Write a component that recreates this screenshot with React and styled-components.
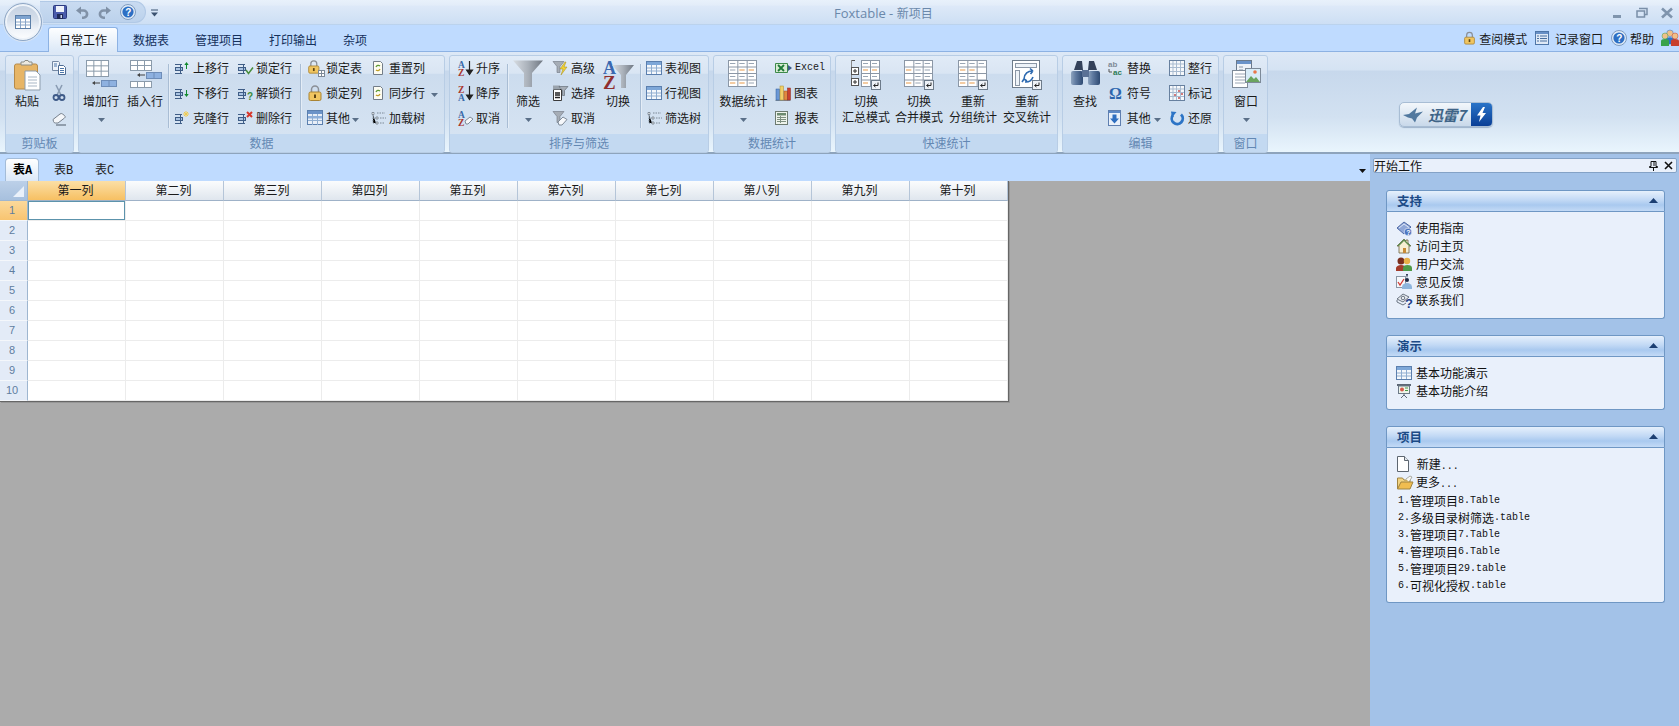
import React from 'react';
import styled, { createGlobalStyle } from 'styled-components';

const Global = createGlobalStyle`
  html, body { margin: 0; padding: 0; height: 100%; overflow: hidden; }
  body { font-family: "Noto Sans CJK SC", "Liberation Sans", sans-serif; font-size: 12px; color: #1a1a1a; }
  #root { height: 100%; }
`;

const Page = styled.div`display:flex;flex-direction:column;height:726px;width:1679px;overflow:hidden;position:relative;`;
const TitleBar = styled.div`height:25px;flex:none;display:flex;align-items:center;background:linear-gradient(#e8f1fb 0,#e3edf9 20%,#dde9f8 25%,#cddff4 96%,#a9c6e6 100%);`;
const Qat = styled.div`margin-left:40px;width:106px;height:22px;margin-top:-1px;display:flex;align-items:center;padding-left:13px;gap:9px;box-sizing:border-box;background:linear-gradient(#c9dbf1,#bcd2ec);border:1px solid #b1c9e6;border-left:none;border-radius:0 12px 12px 0;`;
const QatCaret = styled.div`margin-left:5px;width:9px;display:flex;`;
const TitleText = styled.div`margin-left:674px;width:100px;white-space:nowrap;color:#6b88aa;font-size:12px;line-height:25px;`;
const TitleLatin = styled.span`font-family:"Open Sans",sans-serif;font-size:13px;`;
const WinControls = styled.div`margin-left:auto;display:flex;align-items:center;gap:12px;padding-right:5px;`;
const Orb = styled.div`position:absolute;left:4px;top:3px;width:38px;height:38px;border-radius:50%;box-sizing:border-box;border:1px solid #8ea6c4;background:linear-gradient(#c3d0e1 0,#d6dfeb 45%,#eef2f8 70%,#fdfeff 100%);display:flex;align-items:center;justify-content:center;box-shadow:0 0 0 1px #d7e4f4,inset 0 0 0 2px #eef3f9;z-index:5;`;

const TabRow = styled.div`height:26px;flex:none;display:flex;align-items:flex-end;gap:4px;padding-left:48px;background:#bfdbff;`;
const Tab = styled.div`height:24px;box-sizing:border-box;padding:0 10px;line-height:23px;color:#15315c;white-space:nowrap;position:relative;border:1px solid transparent;border-bottom:none;
  ${p => p.$active && `color:#111;margin-bottom:-1px;height:25px;background:linear-gradient(#fdfeff,#dbe8f7);border-color:#8db2e3;border-radius:3px 3px 0 0;z-index:2;`}`;
const TopActions = styled.div`margin-left:auto;display:flex;align-items:center;height:26px;color:#1a1a1a;`;
const TopAction = styled.div`display:flex;align-items:center;gap:3px;margin-left:${p => p.$ml}px;white-space:nowrap;`;

const Ribbon = styled.div`height:103px;flex:none;box-sizing:border-box;display:flex;align-items:flex-start;gap:4px;padding:3px 0 0 5px;border-top:1px solid #8db2e3;border-bottom:2px solid #8ea4bc;background:linear-gradient(#dde8f6 0,#d5e3f3 18%,#c7d8ec 19%,#d2e1f1 65%,#e9f5fd 100%);`;
const Group = styled.div`width:${p => p.$w}px;height:98px;flex:none;box-sizing:border-box;display:flex;flex-direction:column;border:1px solid #b8cde5;border-radius:3px;overflow:hidden;background:linear-gradient(#e1ebf7 0,#d9e5f3 18%,#ccdcee 19%,#d8e5f3 100%);`;
const GroupBody = styled.div`height:78px;flex:none;display:flex;align-items:flex-start;margin-left:-1px;`;
const Caption = styled.div`height:18px;line-height:17px;flex:none;text-align:center;color:#6388b3;background:#c3d9f1;`;
const Large = styled.div`width:${p => p.$w}px;flex:none;display:flex;flex-direction:column;align-items:center;padding-top:3px;`;
const LargeIcon = styled.div`height:34px;display:flex;align-items:flex-start;justify-content:center;padding-top:1px;box-sizing:border-box;`;
const LargeLabel = styled.div`line-height:16px;text-align:center;white-space:nowrap;`;
const Drop = styled.div`height:14px;margin-top:4px;display:flex;align-items:center;`;
const Sep = styled.div`width:1px;height:64px;margin:8px 0 0 ${p => p.$ml}px;flex:none;background:#a9bdd4;box-shadow:1px 0 0 #e4edf7;`;
const SmallCol = styled.div`width:${p => p.$w}px;box-sizing:border-box;padding:0 0 0 ${p => p.$pl}px;margin-top:-1px;flex:none;display:flex;flex-direction:column;`;
const Small = styled.div`height:25px;display:flex;align-items:center;gap:3px;white-space:nowrap;`;
const InlineCaret = styled.span`margin-left:${p => p.$ml}px;display:inline-flex;vertical-align:middle;`;
const Lat = styled.span`font-family:"Liberation Mono",monospace;font-size:10px;${p => p.$bold && 'font-weight:700;'}`;
const SheetLat = styled.span`font-family:"Liberation Mono",monospace;font-size:12px;letter-spacing:-1.2px;${p => p.$bold && 'font-weight:700;'}`;

const Logo = styled.div`margin:47px 0 0 127px;width:94px;height:25px;flex:none;display:flex;box-sizing:border-box;border:1px solid #a8bdd4;border-radius:5px;overflow:hidden;background:linear-gradient(#f3f7fb,#c9d9ea);box-shadow:0 1px 1px #9db2ca;`;
const LogoMain = styled.div`flex:1;display:flex;align-items:center;gap:4px;padding-left:3px;color:#3f6487;font-style:italic;font-weight:700;font-size:15px;letter-spacing:-.5px;`;
const LogoBolt = styled.div`width:21px;display:flex;align-items:center;justify-content:center;background:linear-gradient(#2a74c8,#0a3f96);`;

const Main = styled.div`flex:1;display:flex;min-height:0;`;
const Left = styled.div`width:1370px;flex:none;display:flex;flex-direction:column;background:#ababab;`;
const SheetBar = styled.div`height:27px;flex:none;display:flex;align-items:flex-end;gap:7px;padding:0 4px 0 5px;background:#bfdbff;`;
const SheetTab = styled.div`height:${p => p.$active ? 23 : 22}px;box-sizing:border-box;padding:0 7px;line-height:${p => p.$active ? 19 : 17}px;color:#222;border:1px solid transparent;border-bottom:none;
  ${p => p.$active && `font-weight:700;color:#000;background:linear-gradient(#fff,#dbe8f8);border-color:#a4bcd8;border-radius:4px 4px 0 0;`}`;
const SheetCaret = styled.div`margin:auto 0 8px auto;display:flex;`;

const GridWrap = styled.div`flex:1;`;
const Grid = styled.div`display:grid;grid-template-columns:28px repeat(10,98px);grid-auto-rows:20px;width:1008px;box-sizing:content-box;background:#fff;border-right:1px solid #666;border-bottom:1px solid #666;box-shadow:1px 1px 0 #969696;`;
const Corner = styled.div`background:linear-gradient(#bcd0e8,#a7c0de);border-right:1px solid #9eb6d0;border-bottom:1px solid #9eb6d0;box-sizing:border-box;display:flex;align-items:flex-end;justify-content:flex-end;padding:0 3px 3px 0;`;
const ColHead = styled.div`box-sizing:border-box;text-align:center;padding-right:2px;line-height:18px;color:#1a1a1a;border-right:1px solid #b5c5d8;border-bottom:1px solid #9fb2c8;background:${p => p.$active ? 'linear-gradient(#fbdfa6,#f7c062)' : 'linear-gradient(#fbfcfd,#dfe6ee)'};`;
const RowHead = styled.div`box-sizing:border-box;text-align:center;padding-right:3px;font-family:"Liberation Sans",sans-serif;font-size:11px;line-height:19px;color:#5f7d9f;border-right:1px solid #9eb6d0;border-bottom:1px solid #f4f7fb;background:${p => p.$active ? 'linear-gradient(#fbd99b,#f8c470)' : '#e3ebf7'};`;
const Cell = styled.div`box-sizing:border-box;border-right:1px solid #ececec;border-bottom:1px solid #ececec;${p => p.$selected && 'box-shadow:inset 0 0 0 1px #5c93ac;'}`;

const Pane = styled.div`flex:1;background:#a3c2e8;display:flex;flex-direction:column;`;
const PaneHead = styled.div`height:15px;margin:4px 2px 0 3px;flex:none;box-sizing:border-box;display:flex;align-items:center;padding:0 3px 0 0;line-height:13px;background:#e9f0fb;border:1px solid #84a2c6;border-radius:2px;color:#111;`;
const PaneHeadBtns = styled.div`margin-left:auto;display:flex;gap:6px;align-items:center;`;
const Panels = styled.div`display:flex;flex-direction:column;gap:16px;padding:17px 14px 0 16px;`;
const Panel = styled.div`display:flex;flex-direction:column;`;
const PanelHead = styled.div`height:22px;box-sizing:border-box;display:flex;align-items:center;justify-content:space-between;padding:0 6px 2px 10px;color:#1c4a86;font-weight:700;font-size:12.5px;background:linear-gradient(#e6f0fc 0,#c2d9f5 45%,#a9c9ef 70%,#c3daf6 100%);border:1px solid #6f97c4;border-radius:3px 3px 0 0;`;
const PanelBody = styled.div`box-sizing:border-box;padding:7px 0 9px 9px;background:#e9f0fb;border:1px solid #6f97c4;border-top:none;border-radius:0 0 3px 3px;`;
const PanelItem = styled.div`height:18px;display:flex;align-items:center;gap:4px;white-space:nowrap;color:#111;`;
const PanelItemText = styled.span`position:relative;top:-1px;`;
const Recent = styled.div`height:17px;box-sizing:border-box;padding:2px 0 0 2px;display:flex;align-items:center;white-space:nowrap;color:#111;`;

/* ---------- icons ---------- */
const SvgBox = styled.svg`display:block;flex:none;overflow:visible;`;
const S = ({ w = 16, h = 16, vb, children }) => <SvgBox width={w} height={h} viewBox={vb || `0 0 ${w} ${h}`}>{children}</SvgBox>;
const Tx = ({ x, y, s = 7, c = '#000', f = 'Liberation Sans', b = 700, children }) => <text x={x} y={y} fontSize={s} fill={c} fontFamily={f} fontWeight={b}>{children}</text>;

const Caret = ({ c = '#5a6f88' }) => <S w={7} h={4}><path d="M0 0h7L3.5 4z" fill={c} /></S>;
const QatDrop = () => <S w={7} h={8}><path d="M0 1h7" stroke="#3b5270" /><path d="M0 3.5h7L3.5 7.5z" fill="#3b5270" /></S>;
const Save = () => <S w={14} h={14}><rect x=".5" y=".5" width="13" height="13" rx="1" fill="#4a5cac" stroke="#2b3a80" /><rect x="3" y="1" width="8" height="6" fill="#eef2fb" /><rect x="4" y="9" width="6" height="5" fill="#1f2a58" /><rect x="7.5" y="10" width="1.5" height="3" fill="#cdd6ee" /></S>;
const Undo = ({ flip }) => <S w={13} h={13}><g transform={flip ? 'translate(13 0) scale(-1 1)' : undefined}><path d="M4 4.5h3.5a3.6 3.6 0 0 1 0 7.2H6" fill="none" stroke="#8192a8" strokeWidth="2.6" /><path d="M5 .5v8L0 4.5z" fill="#7f90a6" /></g></S>;
const Help = () => <S w={16} h={16}><circle cx="8" cy="8" r="7.5" fill="#dfeaf6" stroke="#7f9cc0" /><circle cx="8" cy="8" r="5.6" fill="#2d6fc4" /><Tx x="5.2" y="11.7" s={10} c="#fff">?</Tx></S>;
const OrbGrid = () => <S w={16} h={14}><rect x=".5" y=".5" width="15" height="13" fill="#fff" stroke="#5c7fa8" /><rect x="1" y="1" width="14" height="3" fill="#7ea3cf" /><path d="M1 7h14M1 10h14M5.5 4v9M10.5 4v9" stroke="#88a5c8" /></S>;
const Clipboard = () => <S w={27} h={31}><rect x=".5" y="4" width="23" height="25" rx="2" fill="#e7b566" stroke="#b68a4a" /><path d="M7 5V2h3l1-1.5h3L15 2h3v3z" fill="#ece9e0" stroke="#8c8c84" /><path d="M11 11h11l4 4v15H11z" fill="#fff" stroke="#8d9dad" /><path d="M14 17h9M14 20h9M14 23h9M14 26h9" stroke="#a9b7c6" /></S>;
const Copy = () => <S><path d="M1.5 1.5h6l1 1v8h-7z" fill="#eef3fa" stroke="#7589a4" /><path d="M7.5 5.5h5l2 2v7h-7z" fill="#fff" stroke="#4e6c94" /><path d="M9 8.500h4M9 10.500h4M9 12.500h4M3 4h3M3 6h3" stroke="#4d77aa" /></S>;
const Cut = () => <S><path d="M5 0l5 10M11 0L6 10" stroke="#8b9db4" strokeWidth="1.6" /><circle cx="5" cy="12.500" r="2.500" fill="none" stroke="#3e5a88" strokeWidth="1.8" /><circle cx="11" cy="12.500" r="2.500" fill="none" stroke="#3e5a88" strokeWidth="1.8" /></S>;
const Eraser = () => <S><path d="M2 9.500l7-5.500a2 2 0 0 1 2.500 0l2 1.500a1.500 1.500 0 0 1 0 2.500L7 13H4.500a2 2 0 0 1-2-1.500z" fill="#f4f6f9" stroke="#76808c" /><path d="M5 15h10" stroke="#4f5a68" /></S>;
const GridLines = ({ x, y, w, h, cols, rows, c = '#8b9bab', fill = '#fff' }) => {
  const cw = w / cols, ch = h / rows; let d = '';
  for (let i = 1; i < cols; i++) d += `M${x + i * cw} ${y}v${h}`;
  for (let i = 1; i < rows; i++) d += `M${x} ${y + i * ch}h${w}`;
  return <g><rect x={x + .5} y={y + .5} width={w} height={h} fill={fill} stroke={c} /><path d={d} transform="translate(.5 .5)" stroke={c} fill="none" /></g>;
};
const BlueBoxes = ({ x, y }) => <g><rect x={x + .5} y={y + .5} width="15" height="6" fill="#8eb1e0" stroke="#6e8db8" /><path d={`M${x + 8} ${y}v7`} stroke="#6e8db8" /></g>;
const LeftArrow = ({ x, y }) => <path d={`M${x} ${y}l3-2v1.500h5v1h-5v1.500z`} fill="#444" />;
const AddRow = () => <S w={31} h={28}><GridLines x={0} y={0} w={22} h={16} cols={3} rows={3} /><LeftArrow x={6} y={23} /><BlueBoxes x={15} y={20} /></S>;
const InsertRow = () => <S w={31} h={28}><GridLines x={0} y={0} w={21} h={10} cols={3} rows={2} /><LeftArrow x={7} y={15} /><BlueBoxes x={16} y={12} /><GridLines x={0} y={21} w={21} h={6} cols={3} rows={1} /></S>;
const RowGlyph = () => <g><path d="M1 4.500h7M1 13.500h7" stroke="#3f5d86" /><rect x="1.500" y="7.500" width="7" height="3" fill="#a9c3e2" stroke="#3f5d86" /><path d="M6.500 4v10" stroke="#3f5d86" /></g>;
const RowUp = () => <S><RowGlyph /><path d="M12.500 2l2.200 3H13v4h-1V5h-1.700z" fill="#118a2e" /></S>;
const RowDown = () => <S><RowGlyph /><path d="M12.500 12l2.200-3H13V5h-1v4h-1.700z" fill="#118a2e" /></S>;
const RowClone = () => <S><RowGlyph /><path d="M12 1v6M9 4h6M10 2l4 4M14 2l-4 4" stroke="#f0cb4e" /></S>;
const RowLock = () => <S><RowGlyph /><path d="M9 10l2.500 3.500L16 7.500" fill="none" stroke="#4a8e3e" strokeWidth="1.500" /></S>;
const RowQ = () => <S><RowGlyph /><Tx x={10} y={15} s={10} c="#3a8a3a">?</Tx></S>;
const RowDel = () => <S><RowGlyph /><path d="M10 2l5 5M15 2l-5 5" stroke="#d7352a" strokeWidth="2" /></S>;
const LockShape = () => <g><path d="M4.500 7V4.500a3.500 3.500 0 0 1 7 0V7" fill="none" stroke="#8a8f96" strokeWidth="1.500" /><rect x="2" y="7" width="12" height="8.500" rx="1.500" fill="#f0c560" stroke="#a98435" /><rect x="7" y="9.500" width="2" height="3.500" fill="#5b4314" /></g>;
const Lock = () => <S><LockShape /></S>;
const TopLock = () => <S w={13} h={14} vb="0 0 16 16"><LockShape /></S>;
const LockTable = () => <S><g transform="scale(.85)"><LockShape /></g><GridLines x={11} y={10} w={6} h={6} cols={2} rows={2} c="#7d8a98" /></S>;
const TableBlue = () => <S w={16} h={14}><rect x=".5" y=".5" width="15" height="13" fill="#f5f8fc" stroke="#5b7fae" /><rect x="1" y="1" width="14" height="3" fill="#7ea7d8" /><path d="M1 7h14M1 10h14M5.500 4v9M10.500 4v9" stroke="#8fadd0" /></S>;
const TableHeavy = () => <S w={16} h={15}><rect x=".5" y=".5" width="15" height="14" fill="#e8eef7" stroke="#5b7fae" /><rect x="1" y="1" width="14" height="3" fill="#6c93c8" /><rect x="1" y="6" width="14" height="2.500" fill="#8eb0dc" /><path d="M1 10.500h14M5.500 4v11M10.500 4v11" stroke="#8fadd0" /></S>;
const DocSync = () => <S><path d="M3.500 1.500h7l2 2v11h-9z" fill="#fdfcf2" stroke="#737d88" /><path d="M6 7a2.500 2.500 0 0 1 4-1" fill="none" stroke="#5f9a33" strokeWidth="1.300" /><path d="M10 9a2.500 2.500 0 0 1-4 1" fill="none" stroke="#c09f28" strokeWidth="1.300" /></S>;
const Tree = () => <S><path d="M2 2.500h2v2H2zM6 7h2v2H6zM6 12h2v2H6z" fill="#fff" stroke="#6f7b88" strokeWidth=".8" /><path d="M3 5v8h3M3 8h3M7 3h8M10 8h6M10 13h5" stroke="#7b8896" strokeDasharray="1.500 1" /></S>;
const AZ = ({ top, bot, tc, bc }) => <g><Tx x={1} y={7.500} s={9.500} f="Liberation Serif" c={tc}>{top}</Tx><Tx x={1} y={15.500} s={9.500} f="Liberation Serif" c={bc}>{bot}</Tx></g>;
const DownArrow = () => <path d="M12.500 1v12M9.500 10l3 4.500 3-4.500z" stroke="#222" strokeWidth="1.200" fill="#222" />;
const SortAsc = () => <S><AZ top="A" bot="Z" tc="#3a6aa8" bc="#a9362e" /><DownArrow /></S>;
const SortDesc = () => <S><AZ top="Z" bot="A" tc="#a9362e" bc="#3a6aa8" /><DownArrow /></S>;
const MiniEraser = () => <path d="M8 11l5-4 3 2-5 5H9z" fill="#f6f8fb" stroke="#7f8b99" />;
const SortClear = () => <S><AZ top="A" bot="Z" tc="#3a6aa8" bc="#a9362e" /><MiniEraser /></S>;
const FunnelDefs = ({ id }) => <linearGradient id={id} x1="0" x2="1" y1="0" y2="0"><stop offset="0" stopColor="#d8dde3" /><stop offset=".5" stopColor="#aab1ba" /><stop offset="1" stopColor="#6f7782" /></linearGradient>;
const FunnelLarge = () => <S w={30} h={27}><defs><FunnelDefs id="fgA" /></defs><path d="M0 .5h30L19 13v14h-8V13z" fill="url(#fgA)" /></S>;
const FunnelSmall = () => <path d="M1 1.500h11L8 6.500v6H5v-6z" fill="#a6adb6" stroke="#6e7681" strokeWidth=".6" />;
const FunnelBolt = () => <S><FunnelSmall /><path d="M13 2l-5 7h3l-2 6 6-8h-3l2-5z" fill="#efd035" stroke="#a58d1a" strokeWidth=".5" /></S>;
const FunnelSelect = () => <S><path d="M1.500 4.500h8v11h-8z" fill="#fff" stroke="#3a3a3a" /><path d="M3 8h5M3 10h5M3 12.500h5" stroke="#222" strokeWidth="1.300" /><path d="M1 .5h7v4H1z" fill="#9aa3ad" /><path d="M7 1.500h9l-3.500 4v5h-2v-5z" fill="#a6adb6" stroke="#59616c" strokeWidth=".6" /></S>;
const FunnelClear = () => <S><FunnelSmall /><path d="M6 12l5-5 4 2.500-5 5.500H7z" fill="#f6f8fb" stroke="#7f8b99" /></S>;
const AZFunnel = () => <S w={30} h={30}><defs><FunnelDefs id="fgB" /></defs><Tx x={0} y={14} s={18} f="Liberation Serif" c="#3a68b0">A</Tx><Tx x={0} y={29} s={19} f="Liberation Serif" c="#8f2f2f">Z</Tx><path d="M9 5h22L23 15v13h-5V15z" fill="url(#fgB)" /></S>;
const Stat = ({ cells, badge, cols = 3, w = 28, h = 26, plus }) => {
  const x0 = plus ? 10 : 0; const cw = (w - x0) / cols;
  return <S w={31} h={31}>
    <GridLines x={x0} y={0} w={w - x0} h={h} cols={cols} rows={4} c="#8b97a6" />
    {cells.map(([c, r, col], i) => <path key={i} d={`M${x0 + c * cw + 2} ${r * (h / 4) + 3.500}h${cw - 4}`} stroke={col === 'o' ? '#e89a48' : '#9aa6b4'} strokeWidth="1.200" />)}
    {plus && <g><path d="M0 .5h4" stroke="#555" fill="none" /><path d="M.5 0v22" stroke="#888" /><rect x=".5" y="7.500" width="7" height="7" fill="#fff" stroke="#555" /><path d="M2 11h4M4 9v4" stroke="#333" /><rect x=".5" y="18.500" width="7" height="7" fill="#fff" stroke="#555" /><path d="M2 22h4M4 20v4" stroke="#333" /></g>}
    {badge && <g><rect x="20.500" y="20.500" width="9" height="9" fill="#eef2f7" stroke="#6d7b8a" /><path d="M27 22.500v3h-4M24.500 24l-2 1.500 2 1.500" fill="none" stroke="#222" /></g>}
  </S>;
};
const g = (c, r) => [c, r, 'g'], o = (c, r) => [c, r, 'o'];
const StatMain = () => <Stat cells={[g(0,0),g(1,0),g(2,0),g(0,1),o(1,1),o(2,1),g(0,2),g(1,2),g(2,2),o(0,3),o(1,3),g(2,3)]} />;
const StatA = () => <Stat plus badge cols={2} cells={[g(0,0),g(1,0),o(0,1),o(1,1),g(0,2),g(1,2),o(0,3)]} />;
const StatB = () => <Stat badge cells={[g(1,0),g(2,0),o(0,1),g(1,1),g(2,1),g(1,2),g(2,2),o(0,3),g(1,3)]} />;
const StatC = () => <Stat badge cells={[g(0,0),g(1,0),g(2,0),o(0,1),o(1,1),g(0,2),g(1,2),o(0,3),o(1,3)]} />;
const CrossIcon = () => <S w={31} h={31}><rect x=".5" y=".5" width="27" height="27" fill="#fff" stroke="#6d7b8a" /><rect x="3.500" y="3.500" width="21" height="4" fill="#eef3f8" stroke="#8b97a6" /><rect x="3.500" y="10.500" width="4" height="15" fill="#eef3f8" stroke="#8b97a6" /><path d="M12 19a8 8 0 0 1 9-8M21 11l-3-2.500M21 11l-2.500 3M12 19l3 2M12 19l-2 3M13 22a8 8 0 0 0 8-5" stroke="#2e6ab0" strokeWidth="1.600" fill="none" /><rect x="20.500" y="20.500" width="9" height="9" fill="#eef2f7" stroke="#6d7b8a" /><path d="M27 22.500v3h-4M24.500 24l-2 1.500 2 1.500" fill="none" stroke="#222" /></S>;
const Excel = () => <S w={17} h={14}><path d="M.5 2.500h12v9H.5z" fill="#d8ecd4" stroke="#3e8a4a" /><path d="M3 4l6 6M9 4l-6 6" stroke="#1e7a37" strokeWidth="1.800" /><path d="M13 4l4 3-4 3z" fill="#3a5a88" /></S>;
const Chart = () => <S w={16} h={16}><path d="M.5 15.500h15" stroke="#7d8a98" /><rect x="1" y="4" width="3.500" height="11" fill="#6a97d6" stroke="#2e5c9d" strokeWidth=".5" /><rect x="5" y="1" width="3.500" height="14" fill="#f1d06a" stroke="#a68a2a" strokeWidth=".5" /><rect x="9" y="6" width="3.500" height="9" fill="#e08a40" stroke="#a9521e" strokeWidth=".5" /><rect x="12.500" y="3" width="3" height="12" fill="#c9412f" stroke="#8a2a1e" strokeWidth=".5" /></S>;
const Report = () => <S w={14} h={14}><rect x=".5" y=".5" width="12" height="13" fill="#eef3ec" stroke="#6c7a70" /><rect x="2" y="2" width="9" height="2.500" fill="#6c8a70" /><path d="M2 6.500h9M2 8.500h9M2 10.500h9M5.500 5v7" stroke="#7d8f80" /></S>;
const Binoculars = () => <S w={29} h={27}><defs><linearGradient id="bin" x1="0" x2="1" y1="0" y2="0"><stop offset="0" stopColor="#8ea4bf" /><stop offset=".4" stopColor="#5f7aa0" /><stop offset="1" stopColor="#2e4a72" /></linearGradient></defs><path d="M3 10l3-9h5l1 9v5h5v-5l1-9h5l3 9z" fill="#33415a" /><rect x="0" y="11" width="12" height="14" rx="2" fill="url(#bin)" /><rect x="17" y="11" width="12" height="14" rx="2" fill="url(#bin)" /><rect x="11" y="10" width="7" height="7" fill="#5a7195" /></S>;
const Replace = () => <S><Tx x={0} y={6.500} s={8} c="#808b98">ab</Tx><Tx x={5} y={14.500} s={8} c="#2a7a55">ac</Tx><path d="M1 9v3h3" stroke="#555" fill="none" /></S>;
const Omega = () => <S><Tx x={1} y={14} s={16} f="Liberation Serif" c="#2c65ad">Ω</Tx></S>;
const BlueDown = () => <S w={13} h={16}><rect x=".5" y=".5" width="12" height="15" fill="#e9f0fa" stroke="#5f7fb0" /><rect x="1" y="1" width="11" height="2" fill="#5d89c6" /><path d="M4.500 4.500h4v4h2.500l-4.500 5-4.500-5h2.500z" fill="#2f6fc0" /></S>;
const FineGrid = ({ dots }) => <S w={16} h={16}><rect x=".5" y=".5" width="15" height="15" fill="#f6f8fb" stroke="#67809f" /><path d="M4 1v14M7.500 1v14M11.500 1v14M1 4h14M1 7.500h14M1 11.500h14" stroke="#a9bbd0" />{dots && <path d="M5 9h2v2H5zM9 5h2v2H9zM9 12h2v2H9zM12 8h2v2h-2z" fill="#d27a7a" />}</S>;
const RestoreI = () => <S><path d="M12 4.500A5.500 5.500 0 1 1 4 5" fill="none" stroke="#2c74c6" strokeWidth="2.800" /><path d="M2 1.500l5.500.5L3 7.500z" fill="#2c74c6" /></S>;
const WindowI = () => <S w={29} h={28}><rect x="4.500" y=".5" width="15" height="20" fill="#eef2f8" stroke="#6b7a8c" /><rect x="5" y="1" width="14" height="3" fill="#6b93c9" /><path d="M7 7h4M7 10h4M7 13h4" stroke="#8a97a6" /><rect x=".5" y="10.500" width="15" height="17" fill="#fff" stroke="#7d8a98" /><path d="M3 14h10M3 17h10M3 20h10M3 23h10" stroke="#9aa6b4" /><rect x="13.500" y="8.500" width="15" height="14" fill="#d8ecf8" stroke="#7d8a98" /><path d="M14 22l5-6 3 3 2-2 4 5z" fill="#6aa45f" /><circle cx="23" cy="12" r="1.800" fill="#e8784a" /></S>;
const ListI = () => <S w={14} h={14}><rect x=".5" y=".5" width="13" height="13" fill="#dfe9f6" stroke="#4f76a8" /><rect x="1" y="1" width="12" height="2" fill="#6890c6" /><path d="M5 5h7M5 7.500h7M5 10h7M2 5h2M2 7.500h2M2 10h2" stroke="#496f9f" /></S>;
const Person = ({ x, y, c, s }) => <g><circle cx={x} cy={y + 3 * s} r={3 * s} fill="#f0c088" stroke={c} strokeWidth=".5" /><path d={`M${x - 4 * s} ${y + 13 * s}v-5a${4 * s} 2 0 0 1 ${8 * s} 0v5z`} fill={c} /></g>;
const People = () => <S w={18} h={16}><Person x={9} y={0} c="#2e72c8" s={1.1} /><Person x={4} y={3} c="#3aa24a" s={1} /><Person x={14} y={3} c="#c8402e" s={1} /></S>;
const PinI = () => <S w={9} h={10}><path d="M2 .5h5v5h1.500v1h-8v-1H2zM4.500 7v3" fill="none" stroke="#111" /><path d="M5 1v4" stroke="#111" /></S>;
const CloseX = () => <S w={9} h={9}><path d="M1 1l7 7M8 1L1 8" stroke="#111" strokeWidth="1.600" /></S>;
const WinMin = () => <S w={14} h={12}><rect x="3" y="8" width="8" height="3" fill="#8095ad" /></S>;
const WinMax = () => <S w={12} h={12}><path d="M3 1.500h8v6H9" fill="none" stroke="#7a8fa8" strokeWidth="1.500" /><rect x="1" y="4" width="7.500" height="6" fill="none" stroke="#7a8fa8" strokeWidth="1.500" /></S>;
const WinClose = () => <S w={14} h={12}><path d="M2 1.500l10 9M12 1.500l-10 9" stroke="#7f94ad" strokeWidth="2.600" /></S>;
const PanelUp = () => <S w={9} h={5}><path d="M0 5L4.500 0 9 5z" fill="#1c3f72" /></S>;
const Book = () => <S><path d="M1 8l7-6 7 5-7 7z" fill="#8fa7d8" stroke="#4f6aa6" /><path d="M3 8l5-4 5 3.500" stroke="#dfe7f6" fill="none" /><circle cx="12" cy="12" r="3.800" fill="#4c74c0" stroke="#fff" strokeWidth=".6" /><Tx x={10.200} y={14.800} s={7} c="#fff">?</Tx></S>;
const House = () => <S><path d="M8 1L1 8h2v7h10V8h2l-3-3V2h-2v1z" fill="#f7eed2" stroke="#6d6245" strokeWidth=".8" /><path d="M8 1L1 8h2l5-5 5 5h2z" fill="#5f8c4e" /><rect x="7" y="10" width="3" height="5" fill="#c88a36" /></S>;
const Users = () => <S><circle cx="5" cy="5" r="3.500" fill="#7a2e1e" /><path d="M0 15v-3a5 3 0 0 1 10 0v3z" fill="#a33b2b" /><circle cx="11" cy="5" r="3.200" fill="#e8b048" /><path d="M7 15v-3a4.500 3 0 0 1 9 0v3z" fill="#4f9a48" /></S>;
const Feedback = () => <S><rect x=".5" y="2.500" width="9" height="11" fill="#f6f8fb" stroke="#8b97a6" /><path d="M2 8l2 3 4-6" stroke="#d13a34" fill="none" strokeWidth="1.300" /><circle cx="11" cy="6" r="2" fill="#1f2a44" /><path d="M10 0l1 4 1-4z" fill="#1f2a44" /><path d="M6 15v-2a5 4 0 0 1 10 0v2z" fill="#8eb5dd" /></S>;
const Contact = () => <S><path d="M1 7l6-5 6 3-6 5z" fill="#e9edf2" stroke="#6a7482" /><circle cx="7" cy="6" r="1.800" fill="none" stroke="#6a7482" /><path d="M1 8v2l6 3 3-2" stroke="#6a7482" fill="none" /><Tx x={9} y={15.500} s={13} c="#1f3f8a">?</Tx></S>;
const Presentation = () => <S><rect x="1" y="1" width="14" height="2" fill="#5d6775" /><rect x="2.500" y="3" width="11" height="7.500" fill="#eef4ea" stroke="#6d7a88" /><circle cx="6" cy="6.500" r="2" fill="#d7594a" /><path d="M9 5h3M9 7.500h3" stroke="#4a9a48" /><path d="M8 10.500v2M5 15l3-3 3 3" stroke="#5d6775" fill="none" /></S>;
const DocI = () => <S w={14} h={16}><path d="M1.500 .5h7l4 4v11h-11z" fill="#fff" stroke="#5d6670" /><path d="M8.500 .5v4h4" fill="#e3e7ec" stroke="#5d6670" /></S>;
const Folder = () => <S w={16} h={16}><path d="M1.500 15V4h5l1.500 2h6v2" fill="#f2d483" stroke="#a08440" /><path d="M10 5l4-3 2 1-3 5" fill="#f7f7f2" stroke="#8c8c84" strokeWidth=".7" /><path d="M1.500 15L5 8h12l-3 7z" fill="#f0bd50" stroke="#a08440" /></S>;
const Bird = () => <S w={21} h={16}><path d="M0 8l6-1L14 .5l-2 6 8-2-6 6-2 5-3-4-4-1z" fill="#51789e" /></S>;
const Bolt = () => <S w={11} h={15}><path d="M7 0L1 8.500h3.500L3 15l7-9H6.500L9 0z" fill="#fff" /></S>;

const RibbonSmall = ({ icon, children }) => <Small>{icon}{children}</Small>;

export default function App() {
  const cols = ['第一列', '第二列', '第三列', '第四列', '第五列', '第六列', '第七列', '第八列', '第九列', '第十列'];
  const rows = [1, 2, 3, 4, 5, 6, 7, 8, 9, 10];
  return (
    <Page>
      <Global />
      <Orb><OrbGrid /></Orb>
      <TitleBar>
        <Qat>
          <Save /><Undo /><Undo flip /><Help />
        </Qat>
        <QatCaret><QatDrop /></QatCaret>
        <TitleText><TitleLatin>Foxtable - </TitleLatin>新项目</TitleText>
        <WinControls><WinMin /><WinMax /><WinClose /></WinControls>
      </TitleBar>
      <TabRow>
        <Tab $active>日常工作</Tab>
        <Tab>数据表</Tab>
        <Tab>管理项目</Tab>
        <Tab>打印输出</Tab>
        <Tab>杂项</Tab>
        <TopActions>
          <TopAction $ml={0}><TopLock />查阅模式</TopAction>
          <TopAction $ml={8}><ListI />&nbsp;记录窗口</TopAction>
          <TopAction $ml={8}><Help />帮助</TopAction>
          <TopAction $ml={7}><People /></TopAction>
        </TopActions>
      </TabRow>
      <Ribbon>
        <Group $w={69}>
          <GroupBody>
            <Large $w={44}><LargeIcon><Clipboard /></LargeIcon><LargeLabel>粘贴</LargeLabel></Large>
            <SmallCol $w={24} $pl={2}>
              <RibbonSmall icon={<Copy />} />
              <RibbonSmall icon={<Cut />} />
              <RibbonSmall icon={<Eraser />} />
            </SmallCol>
          </GroupBody>
          <Caption>剪贴板</Caption>
        </Group>
        <Group $w={367}>
          <GroupBody>
            <Large $w={46}><LargeIcon><AddRow /></LargeIcon><LargeLabel>增加行</LargeLabel><Drop><Caret /></Drop></Large>
            <Large $w={42}><LargeIcon><InsertRow /></LargeIcon><LargeLabel>插入行</LargeLabel></Large>
            <Sep $ml={2} />
            <SmallCol $w={64} $pl={5}>
              <RibbonSmall icon={<RowUp />}>上移行</RibbonSmall>
              <RibbonSmall icon={<RowDown />}>下移行</RibbonSmall>
              <RibbonSmall icon={<RowClone />}>克隆行</RibbonSmall>
            </SmallCol>
            <SmallCol $w={64} $pl={4}>
              <RibbonSmall icon={<RowLock />}>锁定行</RibbonSmall>
              <RibbonSmall icon={<RowQ />}>解锁行</RibbonSmall>
              <RibbonSmall icon={<RowDel />}>删除行</RibbonSmall>
            </SmallCol>
            <Sep $ml={3} />
            <SmallCol $w={65} $pl={6}>
              <RibbonSmall icon={<LockTable />}>锁定表</RibbonSmall>
              <RibbonSmall icon={<Lock />}>锁定列</RibbonSmall>
              <RibbonSmall icon={<TableHeavy />}><span>其他<InlineCaret $ml={2}><Caret /></InlineCaret></span></RibbonSmall>
            </SmallCol>
            <SmallCol $w={78} $pl={4}>
              <RibbonSmall icon={<DocSync />}>重置列</RibbonSmall>
              <RibbonSmall icon={<DocSync />}><span>同步行<InlineCaret $ml={6}><Caret /></InlineCaret></span></RibbonSmall>
              <RibbonSmall icon={<Tree />}>加载树</RibbonSmall>
            </SmallCol>
          </GroupBody>
          <Caption>数据</Caption>
        </Group>
        <Group $w={260}>
          <GroupBody>
            <SmallCol $w={58} $pl={8}>
              <RibbonSmall icon={<SortAsc />}>升序</RibbonSmall>
              <RibbonSmall icon={<SortDesc />}>降序</RibbonSmall>
              <RibbonSmall icon={<SortClear />}>取消</RibbonSmall>
            </SmallCol>
            <Sep $ml={0} />
            <Large $w={40}><LargeIcon><FunnelLarge /></LargeIcon><LargeLabel>筛选</LargeLabel><Drop><Caret /></Drop></Large>
            <SmallCol $w={50} $pl={4}>
              <RibbonSmall icon={<FunnelBolt />}>高级</RibbonSmall>
              <RibbonSmall icon={<FunnelSelect />}>选择</RibbonSmall>
              <RibbonSmall icon={<FunnelClear />}>取消</RibbonSmall>
            </SmallCol>
            <Large $w={40}><LargeIcon><AZFunnel /></LargeIcon><LargeLabel>切换</LargeLabel></Large>
            <Sep $ml={2} />
            <SmallCol $w={66} $pl={5}>
              <RibbonSmall icon={<TableBlue />}>表视图</RibbonSmall>
              <RibbonSmall icon={<TableBlue />}>行视图</RibbonSmall>
              <RibbonSmall icon={<Tree />}>筛选树</RibbonSmall>
            </SmallCol>
          </GroupBody>
          <Caption>排序与筛选</Caption>
        </Group>
        <Group $w={118}>
          <GroupBody>
            <Large $w={61}><LargeIcon><StatMain /></LargeIcon><LargeLabel>数据统计</LargeLabel><Drop><Caret /></Drop></Large>
            <SmallCol $w={57} $pl={1}>
              <RibbonSmall icon={<Excel />}><Lat>Excel</Lat></RibbonSmall>
              <RibbonSmall icon={<Chart />}>图表</RibbonSmall>
              <RibbonSmall icon={<Report />}>&nbsp;报表</RibbonSmall>
            </SmallCol>
          </GroupBody>
          <Caption>数据统计</Caption>
        </Group>
        <Group $w={223}>
          <GroupBody>
            <Large $w={62}><LargeIcon><StatA /></LargeIcon><LargeLabel>切换<br />汇总模式</LargeLabel></Large>
            <Large $w={44}><LargeIcon><StatB /></LargeIcon><LargeLabel>切换<br />合并模式</LargeLabel></Large>
            <Large $w={64}><LargeIcon><StatC /></LargeIcon><LargeLabel>重新<br />分组统计</LargeLabel></Large>
            <Large $w={44}><LargeIcon><CrossIcon /></LargeIcon><LargeLabel>重新<br />交叉统计</LargeLabel></Large>
          </GroupBody>
          <Caption>快速统计</Caption>
        </Group>
        <Group $w={157}>
          <GroupBody>
            <Large $w={46}><LargeIcon><Binoculars /></LargeIcon><LargeLabel>查找</LargeLabel></Large>
            <SmallCol $w={61} $pl={0}>
              <RibbonSmall icon={<Replace />}>替换</RibbonSmall>
              <RibbonSmall icon={<Omega />}>符号</RibbonSmall>
              <RibbonSmall icon={<BlueDown />}><span>&nbsp;其他<InlineCaret $ml={3}><Caret /></InlineCaret></span></RibbonSmall>
            </SmallCol>
            <SmallCol $w={50} $pl={0}>
              <RibbonSmall icon={<FineGrid />}>整行</RibbonSmall>
              <RibbonSmall icon={<FineGrid dots />}>标记</RibbonSmall>
              <RibbonSmall icon={<RestoreI />}>还原</RibbonSmall>
            </SmallCol>
          </GroupBody>
          <Caption>编辑</Caption>
        </Group>
        <Group $w={45}>
          <GroupBody>
            <Large $w={46}><LargeIcon><WindowI /></LargeIcon><LargeLabel>窗口</LargeLabel><Drop><Caret /></Drop></Large>
          </GroupBody>
          <Caption>窗口</Caption>
        </Group>
        <Logo>
          <LogoMain><Bird />迅雷7</LogoMain>
          <LogoBolt><Bolt /></LogoBolt>
        </Logo>
      </Ribbon>
      <Main>
        <Left>
          <SheetBar>
            <SheetTab $active>表<SheetLat $bold>A</SheetLat></SheetTab>
            <SheetTab>表<SheetLat>B</SheetLat></SheetTab>
            <SheetTab>表<SheetLat>C</SheetLat></SheetTab>
            <SheetCaret><Caret c="#111" /></SheetCaret>
          </SheetBar>
          <GridWrap>
            <Grid>
              <Corner><S w={11} h={11}><path d="M11 0v11H0z" fill="#eaf1fa" /></S></Corner>
              {cols.map((c, i) => <ColHead key={c} $active={i === 0}>{c}</ColHead>)}
              {rows.map(r => (
                <React.Fragment key={r}>
                  <RowHead $active={r === 1}>{r}</RowHead>
                  {cols.map((c, i) => <Cell key={c} $selected={r === 1 && i === 0} />)}
                </React.Fragment>
              ))}
            </Grid>
          </GridWrap>
        </Left>
        <Pane>
          <PaneHead>开始工作<PaneHeadBtns><PinI /><CloseX /></PaneHeadBtns></PaneHead>
          <Panels>
            <Panel>
              <PanelHead>支持<PanelUp /></PanelHead>
              <PanelBody>
                <PanelItem><Book /><PanelItemText>使用指南</PanelItemText></PanelItem>
                <PanelItem><House /><PanelItemText>访问主页</PanelItemText></PanelItem>
                <PanelItem><Users /><PanelItemText>用户交流</PanelItemText></PanelItem>
                <PanelItem><Feedback /><PanelItemText>意见反馈</PanelItemText></PanelItem>
                <PanelItem><Contact /><PanelItemText>联系我们</PanelItemText></PanelItem>
              </PanelBody>
            </Panel>
            <Panel>
              <PanelHead>演示<PanelUp /></PanelHead>
              <PanelBody>
                <PanelItem><TableBlue /><PanelItemText>基本功能演示</PanelItemText></PanelItem>
                <PanelItem><Presentation /><PanelItemText>基本功能介绍</PanelItemText></PanelItem>
              </PanelBody>
            </Panel>
            <Panel>
              <PanelHead>项目<PanelUp /></PanelHead>
              <PanelBody>
                <PanelItem><DocI /><PanelItemText>&nbsp;新建<Lat>...</Lat></PanelItemText></PanelItem>
                <PanelItem><Folder /><PanelItemText>更多<Lat>...</Lat></PanelItemText></PanelItem>
                <Recent><Lat>1.</Lat>管理项目<Lat>8.Table</Lat></Recent>
                <Recent><Lat>2.</Lat>多级目录树筛选<Lat>.table</Lat></Recent>
                <Recent><Lat>3.</Lat>管理项目<Lat>7.Table</Lat></Recent>
                <Recent><Lat>4.</Lat>管理项目<Lat>6.Table</Lat></Recent>
                <Recent><Lat>5.</Lat>管理项目<Lat>29.table</Lat></Recent>
                <Recent><Lat>6.</Lat>可视化授权<Lat>.table</Lat></Recent>
              </PanelBody>
            </Panel>
          </Panels>
        </Pane>
      </Main>
    </Page>
  );
}
